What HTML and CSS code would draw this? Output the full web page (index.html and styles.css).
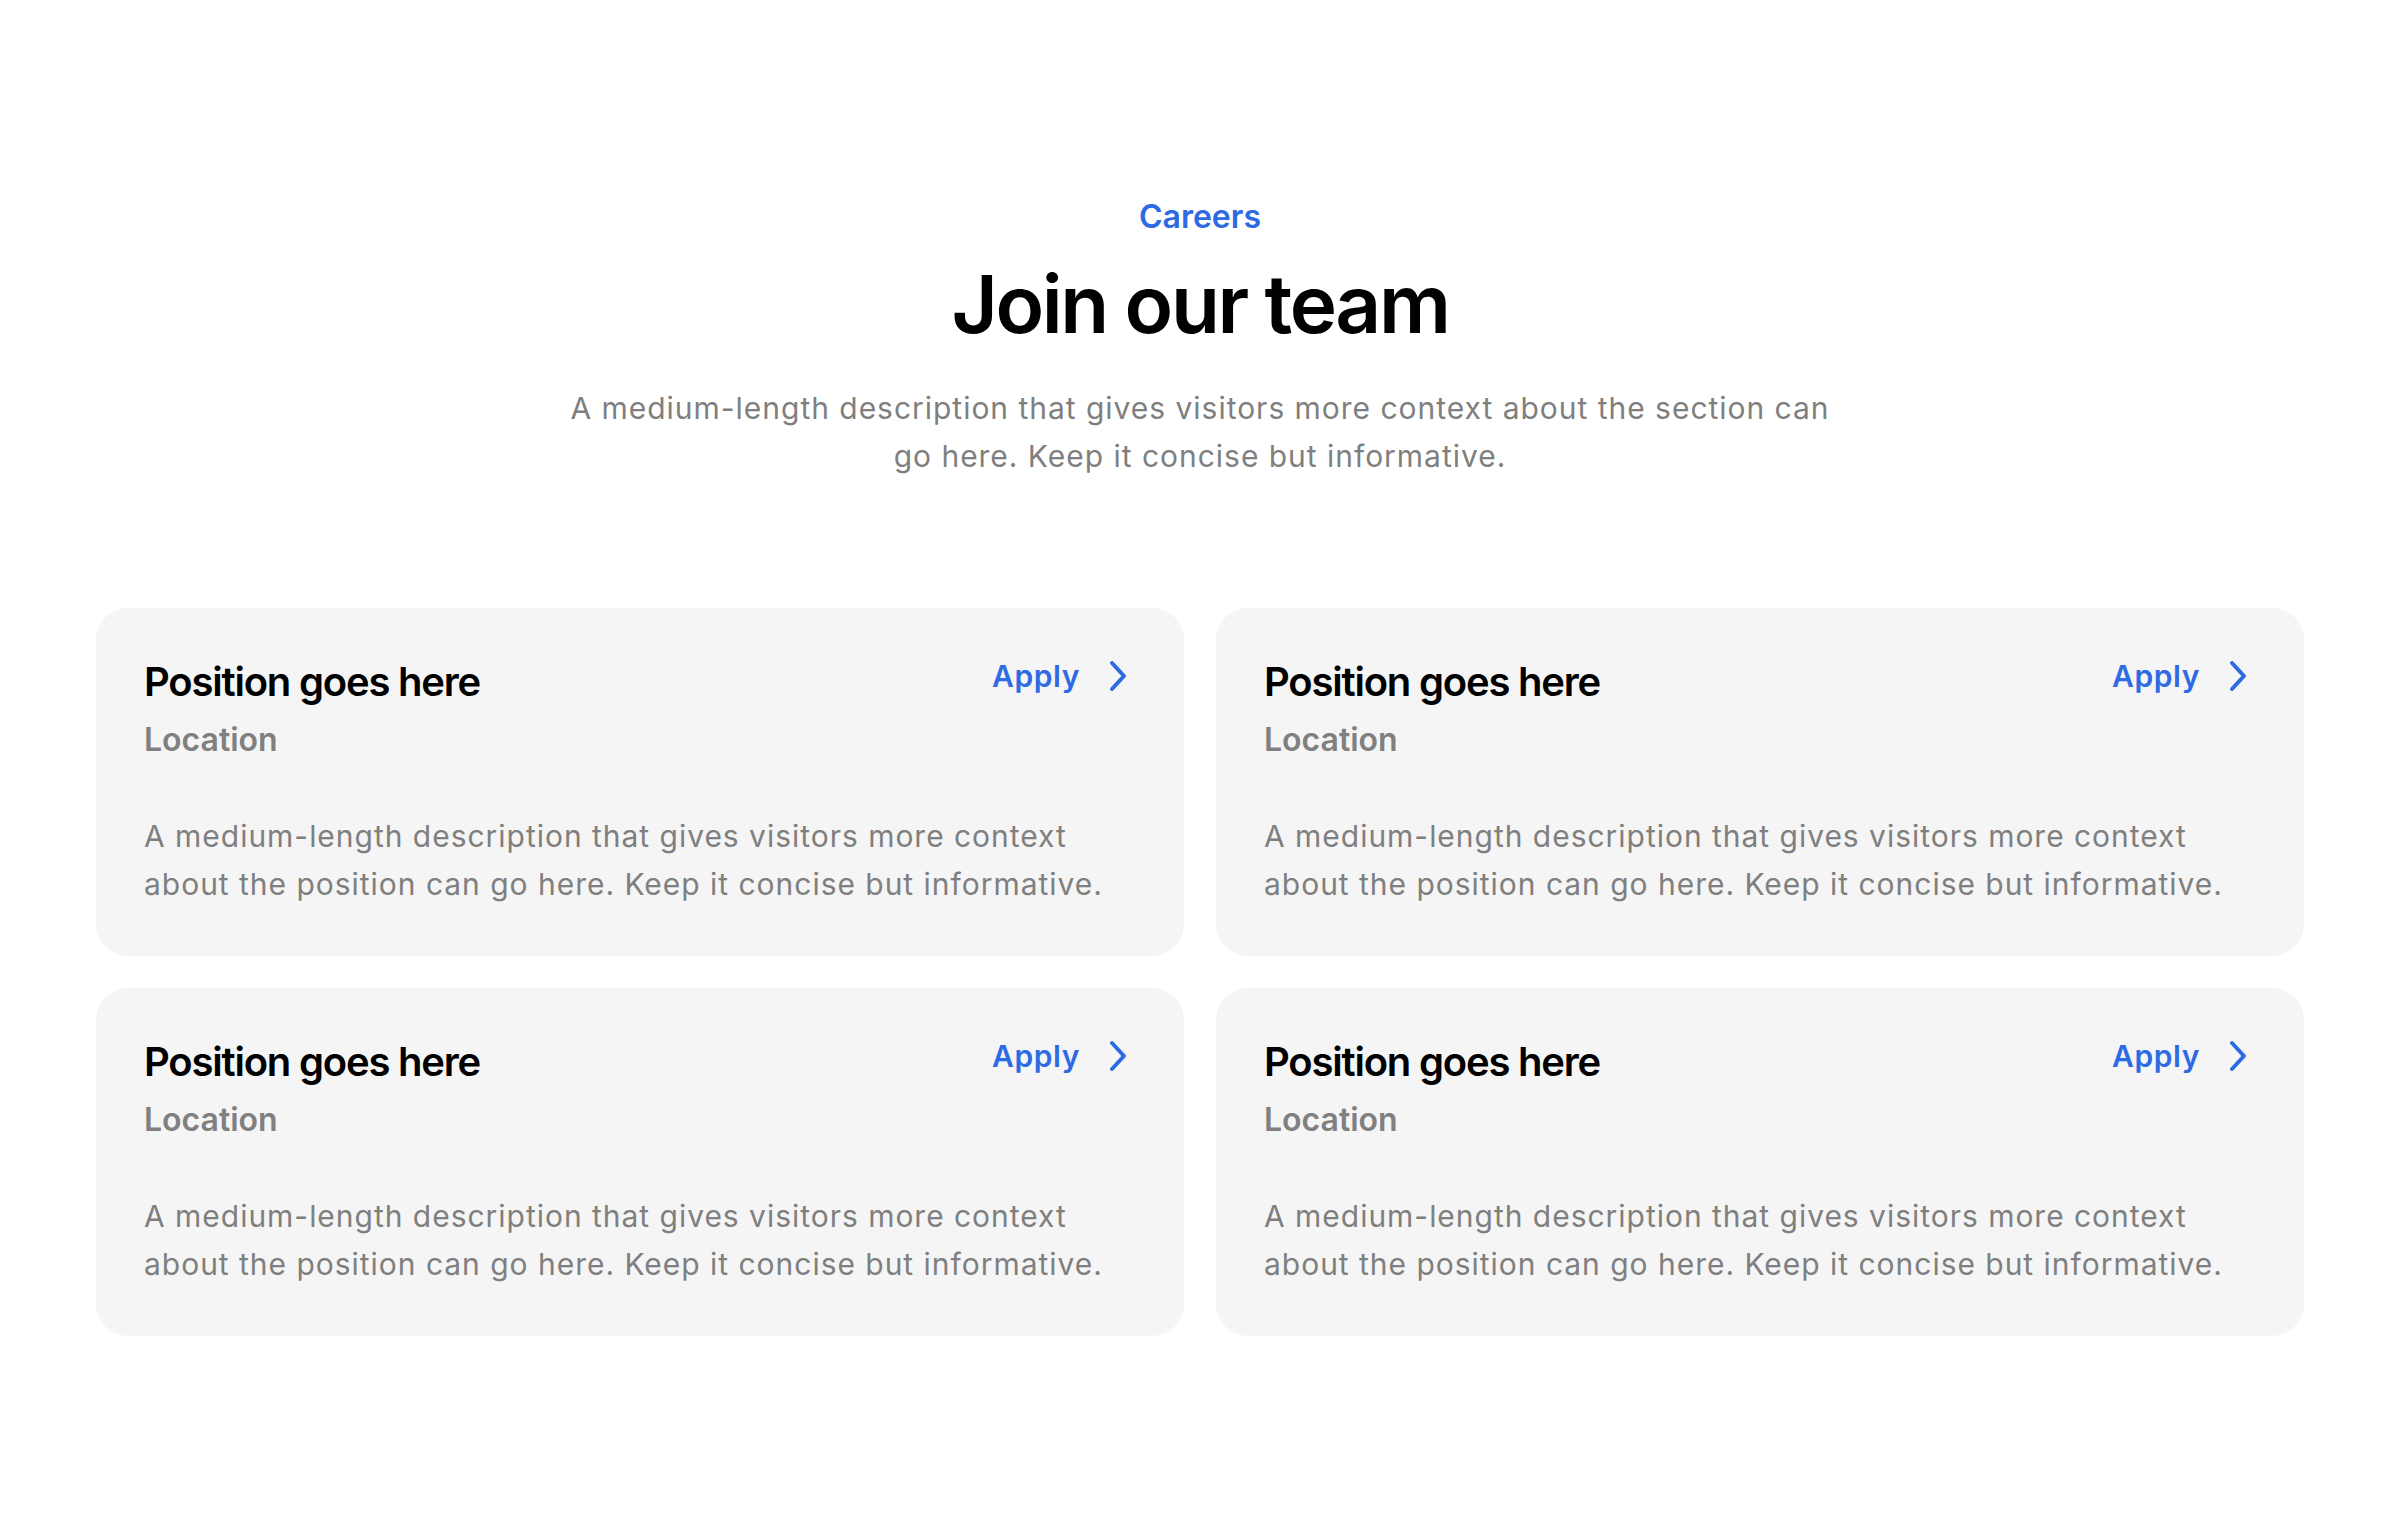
FILE: index.html
```html
<!DOCTYPE html>
<html lang="en">
<head>
<meta charset="utf-8">
<title>Careers</title>
<link rel="stylesheet" href="styles.css">
</head>
<body>
<section class="careers">
  <header class="intro">
    <p class="eyebrow">Careers</p>
    <h1 class="title">Join our team</h1>
    <p class="lead">A medium-length description that gives visitors more context about the section can go here. Keep it concise but informative.</p>
  </header>
  <div class="jobs">
    <article class="job">
      <div class="job-head">
        <h2 class="job-title">Position goes here</h2>
        <a class="apply" href="#">Apply<svg class="chev" width="20" height="32" viewBox="0 0 20 32"><path d="M4 3 L16 16 L4 29" fill="none" stroke="currentColor" stroke-width="4" stroke-linecap="round" stroke-linejoin="round"/></svg></a>
      </div>
      <p class="job-loc">Location</p>
      <p class="job-desc">A medium-length description that gives visitors more context about the position can go here. Keep it concise but informative.</p>
    </article>
    <article class="job">
      <div class="job-head">
        <h2 class="job-title">Position goes here</h2>
        <a class="apply" href="#">Apply<svg class="chev" width="20" height="32" viewBox="0 0 20 32"><path d="M4 3 L16 16 L4 29" fill="none" stroke="currentColor" stroke-width="4" stroke-linecap="round" stroke-linejoin="round"/></svg></a>
      </div>
      <p class="job-loc">Location</p>
      <p class="job-desc">A medium-length description that gives visitors more context about the position can go here. Keep it concise but informative.</p>
    </article>
    <article class="job">
      <div class="job-head">
        <h2 class="job-title">Position goes here</h2>
        <a class="apply" href="#">Apply<svg class="chev" width="20" height="32" viewBox="0 0 20 32"><path d="M4 3 L16 16 L4 29" fill="none" stroke="currentColor" stroke-width="4" stroke-linecap="round" stroke-linejoin="round"/></svg></a>
      </div>
      <p class="job-loc">Location</p>
      <p class="job-desc">A medium-length description that gives visitors more context about the position can go here. Keep it concise but informative.</p>
    </article>
    <article class="job">
      <div class="job-head">
        <h2 class="job-title">Position goes here</h2>
        <a class="apply" href="#">Apply<svg class="chev" width="20" height="32" viewBox="0 0 20 32"><path d="M4 3 L16 16 L4 29" fill="none" stroke="currentColor" stroke-width="4" stroke-linecap="round" stroke-linejoin="round"/></svg></a>
      </div>
      <p class="job-loc">Location</p>
      <p class="job-desc">A medium-length description that gives visitors more context about the position can go here. Keep it concise but informative.</p>
    </article>
  </div>
</section>
</body>
</html>
```

FILE: styles.css
```css
* { box-sizing: border-box; }

html, body {
  margin: 0;
  padding: 0;
  background: #ffffff;
}

body {
  font-family: Inter, "Noto Sans", "Liberation Sans", sans-serif;
  color: #000;
}

.careers {
  padding: 193px 96px 96px;
}

.intro {
  display: flex;
  flex-direction: column;
  align-items: center;
  text-align: center;
}

.eyebrow {
  margin: 0;
  font-size: 32px;
  line-height: 48px;
  font-weight: 600;
  color: #2d6ae3;
}

.title {
  margin: 15px 0 0;
  font-size: 80px;
  line-height: 96px;
  font-weight: 600;
  letter-spacing: -0.03em;
  color: #000;
}

.lead {
  margin: 32px 0 0;
  max-width: 1290px;
  font-size: 30px;
  line-height: 48px;
  font-weight: 400;
  letter-spacing: 0.0325em;
  color: #7f7f7f;
}

.jobs {
  margin-top: 128px;
  display: grid;
  grid-template-columns: 1fr 1fr;
  gap: 32px;
}

.job {
  background: #f5f5f5;
  border-radius: 32px;
  padding: 48px;
}

.job-head {
  display: flex;
  justify-content: space-between;
  align-items: flex-start;
}

.job-title {
  margin: 0;
  font-size: 40px;
  line-height: 52px;
  font-weight: 600;
  letter-spacing: -0.03em;
  color: #000;
}

.apply {
  display: flex;
  align-items: center;
  gap: 28px;
  margin-right: 8px;
  font-size: 30px;
  line-height: 40px;
  font-weight: 600;
  letter-spacing: 0.02em;
  color: #2d6ae3;
  text-decoration: none;
}

.chev {
  display: block;
}

.job-loc {
  margin: 8px 0 0;
  font-size: 32px;
  line-height: 48px;
  font-weight: 600;
  color: #808080;
}

.job-desc {
  margin: 48px 0 0;
  font-size: 30px;
  line-height: 48px;
  font-weight: 400;
  letter-spacing: 0.0325em;
  color: #7f7f7f;
}
```
